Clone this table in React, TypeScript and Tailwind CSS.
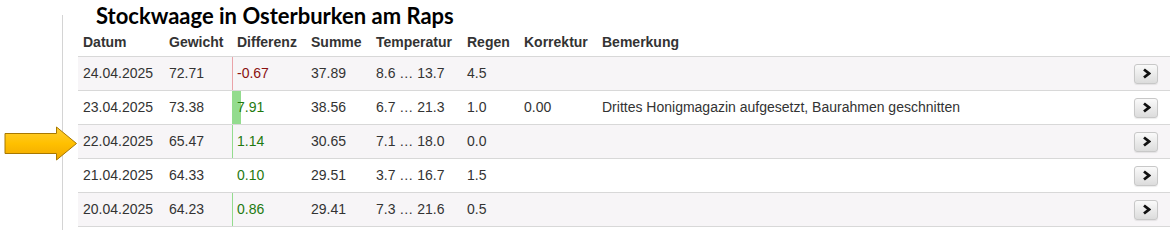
import React from "react";

type Row = {
  datum: string;
  gewicht: string;
  diff: string;
  bar: number;
  summe: string;
  temp: string;
  regen: string;
  korrektur: string;
  bemerkung: string;
};

const rows: Row[] = [
  { datum: "24.04.2025", gewicht: "72.71", diff: "-0.67", bar: -1, summe: "37.89", temp: "8.6 … 13.7", regen: "4.5", korrektur: "", bemerkung: "" },
  { datum: "23.04.2025", gewicht: "73.38", diff: "7.91", bar: 9, summe: "38.56", temp: "6.7 … 21.3", regen: "1.0", korrektur: "0.00", bemerkung: "Drittes Honigmagazin aufgesetzt, Baurahmen geschnitten" },
  { datum: "22.04.2025", gewicht: "65.47", diff: "1.14", bar: 1, summe: "30.65", temp: "7.1 … 18.0", regen: "0.0", korrektur: "", bemerkung: "" },
  { datum: "21.04.2025", gewicht: "64.33", diff: "0.10", bar: 0, summe: "29.51", temp: "3.7 … 16.7", regen: "1.5", korrektur: "", bemerkung: "" },
  { datum: "20.04.2025", gewicht: "64.23", diff: "0.86", bar: 1, summe: "29.41", temp: "7.3 … 21.6", regen: "0.5", korrektur: "", bemerkung: "" },
];

const Arrow = () => (
  <svg width="74" height="36" viewBox="0 0 74 36" className="block">
    <defs>
      <linearGradient id="gold" x1="0" y1="0" x2="0" y2="1">
        <stop offset="0" stopColor="#ffcf33" />
        <stop offset="0.5" stopColor="#ffc000" />
        <stop offset="1" stopColor="#f0a800" />
      </linearGradient>
    </defs>
    <path
      d="M1 7.5 H52.5 V1 L72.5 17.5 L52.5 34 V27.5 H1 Z"
      fill="url(#gold)"
      stroke="#a87800"
      strokeWidth="1"
    />
  </svg>
);

const Chevron = () => (
  <svg width="9" height="11" viewBox="0 0 9 11">
    <path d="M2 1.5 L7 5.5 L2 9.5" fill="none" stroke="#111" strokeWidth="2.8" strokeLinejoin="miter" />
  </svg>
);

export default function App() {
  return (
    <div className="w-[1175px] h-[245px] bg-white relative overflow-hidden" style={{ fontFamily: '"Liberation Sans", Arial, sans-serif' }}>
      <div className="absolute left-[4px] top-[126px]">
        <Arrow />
      </div>
      <div className="flex">
        <div className="w-[62px] shrink-0" />
        <div className="border-l border-[#d4d4d4] h-[215px] mt-[15px]" />
        <div className="flex flex-col w-[1092px] ml-[15px]">
          <h1 className="h-[32px] pt-[2px] ml-[18px] text-[22px] leading-[28px] font-bold text-black" style={{ fontFamily: 'Lato, "Open Sans", sans-serif' }}>
            Stockwaage in Osterburken am Raps
          </h1>
          <div className="flex h-[25px] pt-[2px] leading-[16px] text-[14px] font-bold text-[#333] border-b border-[#d8d8d8]">
            <div className="w-[86px] pl-[5px]">Datum</div>
            <div className="w-[68px] pl-[5px]">Gewicht</div>
            <div className="w-[74px] pl-[5px]">Differenz</div>
            <div className="w-[65px] pl-[5px]">Summe</div>
            <div className="w-[91px] pl-[5px]">Temperatur</div>
            <div className="w-[57px] pl-[5px]">Regen</div>
            <div className="w-[78px] pl-[5px]">Korrektur</div>
            <div className="flex-1 pl-[5px]">Bemerkung</div>
          </div>
          {rows.map((r, i) => (
            <div
              key={r.datum}
              className={
                "flex h-[34px] items-center text-[14px] text-[#333] border-b border-[#d8d8d8] " +
                (i % 2 === 0 ? "bg-[#f7f5f7]" : "bg-white")
              }
            >
              <div className="w-[86px] pl-[5px] pb-[1px]">{r.datum}</div>
              <div className="w-[68px] pl-[5px] pb-[1px]">{r.gewicht}</div>
              <div className="w-[74px] h-full relative flex items-center pl-[5px] pb-[1px]">
                {r.bar !== 0 && (
                  <div
                    className={"absolute left-0 top-0 h-full " + (r.bar < 0 ? "bg-[#eaa3a8]" : "bg-[#93dc8e]")}
                    style={{ width: Math.abs(r.bar) + "px" }}
                  />
                )}
                <span className={"relative " + (r.diff.startsWith("-") ? "text-[#8a1010]" : "text-[#1f7a10]")}>{r.diff}</span>
              </div>
              <div className="w-[65px] pl-[5px] pb-[1px]">{r.summe}</div>
              <div className="w-[91px] pl-[5px] pb-[1px]">{r.temp}</div>
              <div className="w-[57px] pl-[5px] pb-[1px]">{r.regen}</div>
              <div className="w-[78px] pl-[5px] pb-[1px]">{r.korrektur}</div>
              <div className="flex-1 pl-[5px] pb-[1px]">{r.bemerkung}</div>
              <div className="w-[45px] flex justify-start pl-[9px]">
                <button className="w-[24px] h-[20px] rounded-[3px] border border-[#c8c8c8] bg-gradient-to-b from-[#fafafa] to-[#dcdcdc] flex items-center justify-center shadow-[0_1px_1px_rgba(0,0,0,0.08)]">
                  <Chevron />
                </button>
              </div>
            </div>
          ))}
        </div>
      </div>
    </div>
  );
}
